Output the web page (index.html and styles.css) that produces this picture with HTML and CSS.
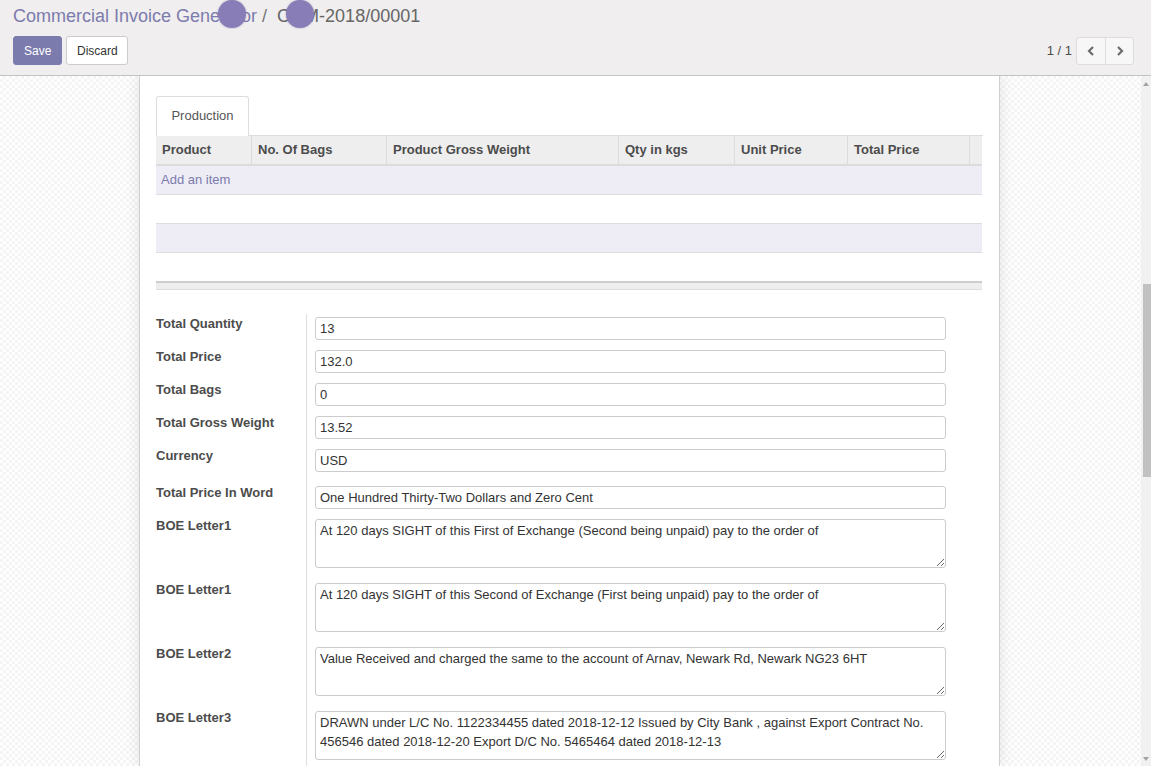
FILE: index.html
```html
<!DOCTYPE html>
<html>
<head>
<meta charset="utf-8">
<link rel="stylesheet" href="styles.css">
</head>
<body>
<div class="control-panel">
  <div class="breadcrumb">
    <span class="crumb-link">Commercial Invoice Generator</span><span class="crumb-sep">/&nbsp;</span><span class="crumb-active">COM-2018/00001</span>
    <span class="dot dot-a"></span>
    <span class="dot dot-b"></span>
  </div>
  <div class="cp-bottom">
    <div class="cp-buttons">
      <button class="btn btn-primary">Save</button>
      <button class="btn btn-default">Discard</button>
    </div>
    <div class="pager">
      <span class="pager-value">1 / 1</span>
      <div class="pager-btns">
        <button class="pbtn"><svg width="10" height="12" viewBox="0 0 10 12"><polyline points="7,2 3,6 7,10" fill="none" stroke="#6b6b6b" stroke-width="2.2"/></svg></button>
        <button class="pbtn"><svg width="10" height="12" viewBox="0 0 10 12"><polyline points="3,2 7,6 3,10" fill="none" stroke="#6b6b6b" stroke-width="2.2"/></svg></button>
      </div>
    </div>
  </div>
</div>
<div class="main">
  <div class="content">
    <div class="sheet">
      <div class="tabs">
        <div class="tab">Production</div>
      </div>
      <table class="list">
        <colgroup>
          <col style="width:95px"><col style="width:135px"><col style="width:232px"><col style="width:116px"><col style="width:113px"><col style="width:122px"><col>
        </colgroup>
        <thead>
          <tr><th>Product</th><th>No. Of Bags</th><th>Product Gross Weight</th><th>Qty in kgs</th><th>Unit Price</th><th>Total Price</th><th></th></tr>
        </thead>
        <tbody>
          <tr class="odd"><td colspan="7" class="add">Add an item</td></tr>
          <tr><td colspan="7"></td></tr>
          <tr class="odd"><td colspan="7"></td></tr>
          <tr class="last"><td colspan="7"></td></tr>
        </tbody>
        <tfoot>
          <tr><td colspan="7"></td></tr>
        </tfoot>
      </table>
      <table class="group">
        <tr class="r"><td class="lbl"><label>Total Quantity</label></td><td class="fld"><input type="text" value="13"></td></tr>
        <tr class="r"><td class="lbl"><label>Total Price</label></td><td class="fld"><input type="text" value="132.0"></td></tr>
        <tr class="r"><td class="lbl"><label>Total Bags</label></td><td class="fld"><input type="text" value="0"></td></tr>
        <tr class="r"><td class="lbl"><label>Total Gross Weight</label></td><td class="fld"><input type="text" value="13.52"></td></tr>
        <tr class="r r-wide"><td class="lbl"><label>Currency</label></td><td class="fld"><input type="text" value="USD"></td></tr>
        <tr class="r"><td class="lbl"><label>Total Price In Word</label></td><td class="fld"><input type="text" value="One Hundred Thirty-Two Dollars and Zero Cent"></td></tr>
        <tr class="r r-ta"><td class="lbl"><label>BOE Letter1</label></td><td class="fld"><textarea>At 120 days SIGHT of this First of Exchange (Second being unpaid) pay to the order of</textarea></td></tr>
        <tr class="r r-ta"><td class="lbl"><label>BOE Letter1</label></td><td class="fld"><textarea>At 120 days SIGHT of this Second of Exchange (First being unpaid) pay to the order of</textarea></td></tr>
        <tr class="r r-ta"><td class="lbl"><label>BOE Letter2</label></td><td class="fld"><textarea>Value Received and charged the same to the account of Arnav, Newark Rd, Newark NG23 6HT</textarea></td></tr>
        <tr class="r r-ta"><td class="lbl"><label>BOE Letter3</label></td><td class="fld"><textarea>DRAWN under L/C No. 1122334455 dated 2018-12-12 Issued by City Bank , against Export Contract No. 456546 dated 2018-12-20 Export D/C No. 5465464 dated 2018-12-13</textarea></td></tr>
      </table>
    </div>
  </div>
  <div class="scrollbar">
    <div class="arrow-up"></div>
    <div class="thumb"></div>
    <div class="track-rest"></div>
    <div class="arrow-down"></div>
  </div>
</div>
</body>
</html>
```
FILE: styles.css
```css
* { box-sizing: border-box; }
html, body { margin: 0; padding: 0; }
body {
  font-family: "Liberation Sans", Arial, sans-serif;
  font-size: 13px;
  color: #4c4c4c;
  width: 1151px;
  height: 766px;
  overflow: hidden;
  background: #fff;
}
.control-panel {
  height: 76px;
  background: #f0eeee;
  border-bottom: 1px solid #c3c3c3;
  padding: 5px 17px 0 13px;
}
.breadcrumb {
  position: relative;
  font-size: 18px;
  line-height: 22px;
  height: 22px;
  white-space: nowrap;
}
.crumb-link { color: #7c7bad; }
.crumb-sep { color: #777; padding: 0 5px; }
.crumb-active { color: #666; }
.dot {
  position: absolute;
  top: -5px;
  width: 28px;
  height: 28px;
  border-radius: 50%;
  background: #887db6;
  box-shadow: 0 0 2px rgba(110, 100, 170, 0.6);
}
.dot-a { left: 205px; }
.dot-b { left: 273px; }
.cp-bottom {
  display: flex;
  justify-content: space-between;
  align-items: center;
  margin-top: 9px;
}
.cp-buttons { display: flex; gap: 4px; }
.btn {
  font-family: "Liberation Sans", Arial, sans-serif;
  font-size: 12px;
  height: 29px;
  padding: 0 10px;
  border-radius: 3px;
  border: 1px solid transparent;
  cursor: pointer;
}
.btn-primary { background: #7c7bad; color: #fff; border-color: #7c7bad; width: 49px; }
.btn-default { background: #fff; color: #333; border-color: #ccc; width: 62px; }
.pager { display: flex; align-items: center; gap: 4px; }
.pager-value { font-size: 13px; color: #4c4c4c; }
.pager-btns {
  display: flex;
  border: 1px solid #ddd;
  border-radius: 3px;
  background: #f7f7f7;
  height: 28px;
}
.pbtn {
  width: 28px;
  height: 26px;
  border: none;
  background: transparent;
  display: flex;
  align-items: center;
  justify-content: center;
  padding: 0;
}
.pbtn + .pbtn { border-left: 1px solid #ddd; }

.main {
  display: flex;
  height: 690px;
}
.content {
  flex: 1;
  overflow: hidden;
  background-color: #fff;
  background-image: repeating-conic-gradient(#f4f4f4 0 25%, #fff 0 50%);
  background-size: 6px 6px;
}
.sheet {
  width: 861px;
  margin: 0 0 0 139px;
  height: 100%;
  background: #fff;
  border-left: 1px solid #cfcfcf;
  border-right: 1px solid #cfcfcf;
  box-shadow: 0 0 14px rgba(0, 0, 0, 0.1);
  padding: 20px 16px 0;
}
.tabs {
  display: flex;
  border-bottom: 1px solid #ddd;
}
.tab {
  width: 93px;
  height: 40px;
  line-height: 38px;
  text-align: center;
  border: 1px solid #ddd;
  border-bottom: none;
  border-radius: 3px 3px 0 0;
  color: #555;
  font-size: 13px;
  margin-bottom: -1px;
  background: #fff;
}
.list {
  width: 826px;
  table-layout: fixed;
  border-collapse: separate;
  border-spacing: 0;
}
.list th {
  height: 30px;
  background: #eee;
  text-align: left;
  font-weight: bold;
  font-size: 13px;
  color: #4c4c4c;
  padding: 0 6px 1px;
  border-left: 1px solid #dcdcdc;
  border-bottom: 2px solid #dcdcdc;
  white-space: nowrap;
}
.list th:first-child { border-left: none; }
.list tbody td {
  height: 29px;
  border-bottom: 1px solid #ddd;
  padding: 0 5px 1px;
}
.list tbody tr.last td { border-bottom: none; height: 28px; }
.list tbody tr.odd td { background: #eeedf6; }
.list td.add { color: #7c7bad; }
.list tfoot td {
  height: 9px;
  background: #eee;
  border-top: 2px solid #cdcdcd;
  border-bottom: 1px solid #ddd;
  padding: 0;
}
.group {
  width: 826px;
  margin-top: 24px;
  border-collapse: separate;
  border-spacing: 0;
}
.group td { vertical-align: top; padding-top: 3px; padding-bottom: 7px; }
.group .r-wide td { padding-bottom: 11px; }
.group .r-ta td { padding-bottom: 12px; }
.lbl {
  width: 151px;
  border-right: 1px solid #ddd;
  padding-left: 0;
  padding-right: 0;
}
.lbl label {
  display: block;
  font-weight: bold;
  font-size: 13px;
  line-height: 12px;
  padding-top: 1px;
  color: #4c4c4c;
  white-space: nowrap;
}
.fld { padding-left: 8px; padding-right: 36px; }
.fld input, .fld textarea {
  display: block;
  width: 100%;
  font-family: "Liberation Sans", Arial, sans-serif;
  font-size: 13px;
  color: #333;
  border: 1px solid #ccc;
  border-radius: 3px;
  background: #fff;
  outline: none;
}
.fld input { height: 23px; padding: 0 4px; }
.fld textarea {
  height: 49px;
  padding: 1px 4px;
  line-height: 19px;
  resize: vertical;
  overflow: hidden;
}
.scrollbar {
  width: 10px;
  background: #f1f1f1;
  display: flex;
  flex-direction: column;
  align-items: flex-end;
}
.arrow-up, .arrow-down {
  width: 10px;
  height: 15px;
  display: flex;
  justify-content: center;
  align-items: center;
}
.arrow-up::after {
  content: "";
  border-left: 3px solid transparent;
  border-right: 3px solid transparent;
  border-bottom: 4px solid #a3a3a3;
}
.arrow-down::after {
  content: "";
  border-left: 3px solid transparent;
  border-right: 3px solid transparent;
  border-top: 4px solid #a3a3a3;
}
.thumb {
  width: 8px;
  height: 193px;
  margin-top: 193px;
  background: #c1c1c1;
}
.track-rest { flex: 1; }
```
